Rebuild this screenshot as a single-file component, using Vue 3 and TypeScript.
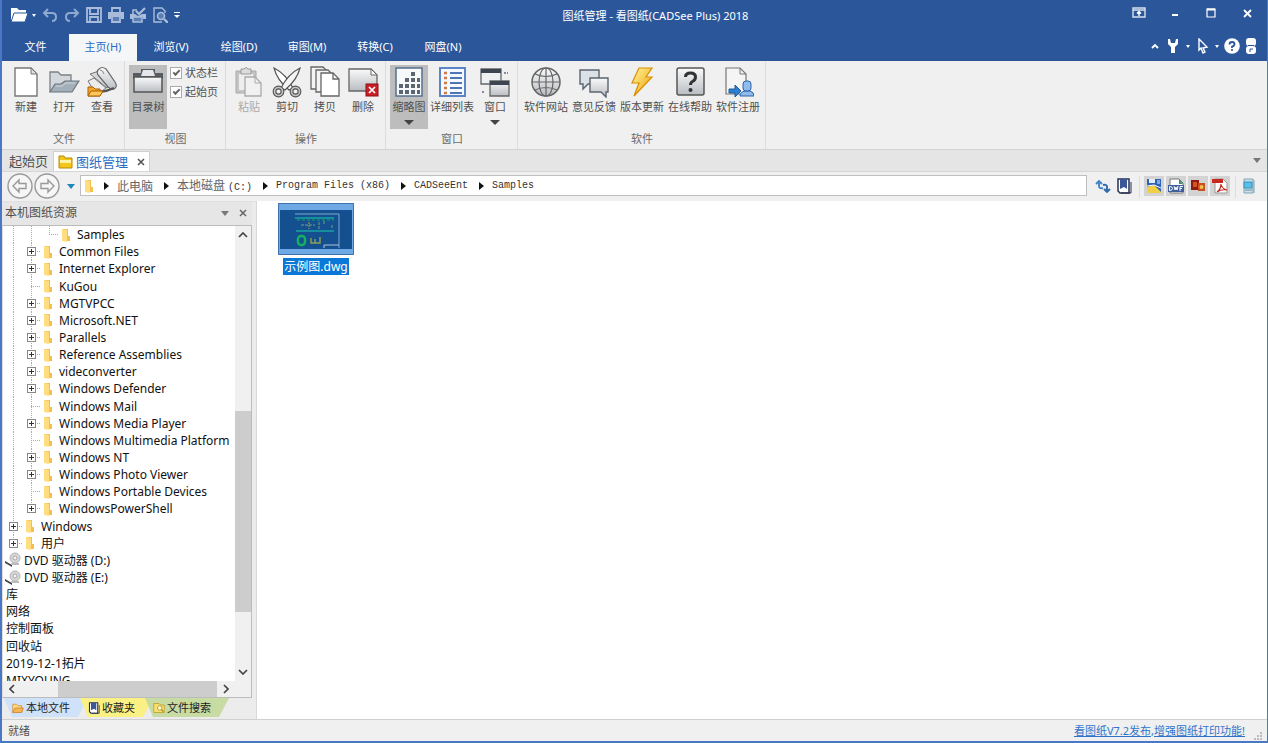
<script setup lang="ts">
import { ref } from 'vue'

type Kind = 'line' | 'plus' | 'tee' | 'elbow' | 'end'
interface TreeRow { label: string; cells: Kind[]; icon?: string }
interface RibbonButton { label: string; icon: string; active?: boolean; disabled?: boolean; menu?: boolean }
interface RibbonGroup { label: string; buttons: RibbonButton[]; checks?: boolean }

const grad =
  '<defs><linearGradient id="gr" x1="0" y1="0" x2="0" y2="1"><stop offset="0" stop-color="#fafafa"/><stop offset="1" stop-color="#b9bdc2"/></linearGradient>' +
  '<linearGradient id="gy" x1="0" y1="0" x2="1" y2="1"><stop offset="0" stop-color="#fff6a0"/><stop offset="1" stop-color="#f0a000"/></linearGradient></defs>'

const big: Record<string, string> = {
  fresh: '<path d="M5 2h16l6 6v22H5z" fill="#fff" stroke="#777" stroke-width="1.4"/><path d="M21 2v6h6z" fill="#ddd" stroke="#777"/>',
  open: '<path d="M2 26V6h8l3 3h10v7" fill="#d3d8dd" stroke="#7b8187" stroke-width="1.3"/><path d="M2 26l5-8h6l4-3h14l-7 11z" fill="#a3afb9" stroke="#6b747c" stroke-width="1.2"/><path d="M8 20h6l4-3h9" fill="none" stroke="#d0d8de"/>',
  view: '<path d="M2 15l6-3 12 10-4 3H8z" fill="#ececec" stroke="#777"/><path d="M9 12L4 8l9-3 14 14-6 3z" fill="#d5d7d9" stroke="#777"/><path d="M13 3q3-3 7 0l9 13q3 5-1 7-3 1-6-2L12 9q-2-4 1-6z" fill="url(#gr)" stroke="#666" stroke-width="1.2"/><path d="M14 4q3 0 4 4" fill="none" stroke="#888"/><path d="M14 26q8-1 14-4" fill="none" stroke="#555" stroke-width="2"/><path d="M2 30V21h5l2 2h5v7z" fill="#f5a623" stroke="#a85f08"/><path d="M2 30l3-5h12l-3 5z" fill="#ffc75a" stroke="#a85f08"/>',
  dirs: '<path d="M1 7h8V3h14v4h8v6H1z" fill="#555d63"/><path d="M11 4h10l2 6H9z" fill="#e5e7e8"/><path d="M2 11h28v15H2z" fill="url(#gr)" stroke="#555" stroke-width="1.5"/>',
  paste: '<path d="M3 5h20v22H3z" fill="#c4c4c4" stroke="#aaa"/><path d="M6 8h14v16H6z" fill="#eee"/><path d="M8 3h3q2-3 4 0h3v5H8z" fill="#ddd" stroke="#999"/><path d="M12 11h10l6 6v13H12z" fill="#f1f1f1" stroke="#aaa" stroke-width="1.3"/><path d="M22 11v6h6" fill="none" stroke="#aaa"/>',
  cut: '<path d="M3 2q12 6 19 20l-4 2Q6 14 3 2z" fill="#fff" stroke="#555" stroke-width="1.2"/><path d="M29 2q-12 6-19 20l4 2Q26 14 29 2z" fill="#f4f4f4" stroke="#555" stroke-width="1.2"/><circle cx="7.5" cy="25.500" r="4" fill="none" stroke="#555" stroke-width="3.800"/><circle cx="24.500" cy="25.500" r="4" fill="none" stroke="#555" stroke-width="3.800"/><circle cx="7.5" cy="25.500" r="4" fill="none" stroke="#c5c5c5" stroke-width="1.600"/><circle cx="24.500" cy="25.500" r="4" fill="none" stroke="#c5c5c5" stroke-width="1.600"/>',
  copy: '<g fill="#f4f4f4" stroke="#666" stroke-width="1.3"><path d="M2 1h12l4 4v18H2z"/><path d="M7 4h12l4 4v18H7z"/><path d="M12 7h12l6 6v17H12z" fill="#fff"/><path d="M24 7v6h6" fill="none"/></g>',
  del: '<path d="M2 3h22l6 6v16H2z" fill="url(#gr)" stroke="#666" stroke-width="1.3"/><path d="M24 3v6h6z" fill="#fff" stroke="#666"/><rect x="19" y="18" width="12" height="12" fill="#c92027" stroke="#8f0f14"/><path d="M22 21l6 6m0-6l-6 6" stroke="#fff" stroke-width="1.7"/>',
  thumbs: '<rect x="3" y="2" width="26" height="28" fill="#f6f8fa" stroke="#56708f" stroke-width="1.5"/><g fill="#5c6670"><path d="M18 6h4v4h-4zM12 12h4v4h-4zM18 12h4v4h-4zM24 12h3v4h-3zM6 18h4v4H6zM12 18h4v4h-4zM18 18h4v4h-4zM24 18h3v4h-3zM6 24h4v4H6zM12 24h4v4h-4zM18 24h4v4h-4zM24 24h3v4h-3z"/></g>',
  details: '<rect x="4" y="2" width="25" height="28" fill="#f5f9ff" stroke="#5b85c6" stroke-width="2"/><path d="M8 7h3M8 12h3M8 17h3M8 22h3M8 27h3" stroke="#d07a48" stroke-width="2.5"/><path d="M14 7h12M14 12h12M14 17h12M14 22h12M14 27h12" stroke="#4f76b2" stroke-width="2"/>',
  windows: '<path d="M2 3h20v15H2z" fill="#eef0f2" stroke="#666" stroke-width="1.3"/><path d="M2 3h20v4H2z" fill="#3d4650"/><path d="M11 15h19v15H11z" fill="url(#gr)" stroke="#666" stroke-width="1.3"/><path d="M11 15h19v4H11z" fill="#3d4650"/><path d="M25 7h4M5 26H2" fill="none" stroke="#668" stroke-width="1.500" stroke-dasharray="2 1"/>',
  globe: '<circle cx="16" cy="16" r="14" fill="url(#gr)" stroke="#666" stroke-width="1.5"/><g fill="none" stroke="#666" stroke-width="1.2"><ellipse cx="16" cy="16" rx="7" ry="14"/><path d="M16 2v28M2 16h28M5 8q11 5 22 0M5 24q11-5 22 0"/></g>',
  chat: '<path d="M2 4h19v14H10l-5 5v-5H2z" fill="#dce1e7" stroke="#5a6470" stroke-width="1.4"/><path d="M12 12h18v14h-2v5l-5-5H12z" fill="url(#gr)" stroke="#5a6470" stroke-width="1.4"/>',
  bolt: '<path d="M13 2h13l-6 9h6L8 30l5-13H6z" fill="url(#gy)" stroke="#d98f00" stroke-width="1.2"/>',
  help: '<rect x="3" y="2" width="27" height="27" rx="2" fill="url(#gr)" stroke="#555" stroke-width="1.5"/><path d="M11.500 11q0-4 5-4t5 4q0 3-3 4.500-2 1-2 3.500" fill="none" stroke="#333" stroke-width="3"/><circle cx="16.500" cy="24" r="2" fill="#333"/>',
  register: '<path d="M4 2h14l6 6v20H4z" fill="#f5f5f5" stroke="#777" stroke-width="1.2"/><path d="M18 2v6h6" fill="none" stroke="#777"/><path d="M7 23h6v-4l6 6-6 6v-4H7z" fill="#2f7fd0" stroke="#1d5a9e"/><path d="M18 30q0-4 5-5h5q4 1 4 5z" fill="#8fbcec" stroke="#2a63a8"/><rect x="21" y="15" width="8" height="10" rx="3" fill="#8fbcec" stroke="#2a63a8"/>'
}

const small: Record<string, string> = {
  undo: '<path d="M3 6h7q4 0 4 4t-4 4" fill="none" stroke="#8fa9d0" stroke-width="2"/><path d="M6 2L2 6l4 4" fill="none" stroke="#8fa9d0" stroke-width="2"/>',
  redo: '<path d="M13 6H6q-4 0-4 4t4 4" fill="none" stroke="#8fa9d0" stroke-width="2"/><path d="M10 2l4 4-4 4" fill="none" stroke="#8fa9d0" stroke-width="2"/>',
  save: '<path d="M1 1h14v14H1zM4 1v6h8V1M4 15v-5h8v5" fill="none" stroke="#a9bddb" stroke-width="1.800"/>',
  print: '<path d="M4 5V1h8v4" fill="none" stroke="#a9bddb" stroke-width="1.800"/><path d="M0 5h16v7h-3V9H3v3H0z" fill="#a9bddb"/><path d="M4 9h8v6H4z" fill="#5b7fb5" stroke="#a9bddb" stroke-width="1.800"/>',
  print2: '<path d="M3 7V3h4" fill="none" stroke="#a9bddb" stroke-width="1.500"/><path d="M0 7h5l3 2 4-2h4v5h-3v-2H3v2H0z" fill="#a9bddb"/><path d="M3 10h9v5H3z" fill="#5b7fb5" stroke="#a9bddb" stroke-width="1.500"/><path d="M6 4l3 3 6-6" fill="none" stroke="#a9bddb" stroke-width="2.200"/>',
  preview: '<path d="M13 6V4l-3-3H2v14h8" fill="none" stroke="#a9bddb" stroke-width="1.400"/><circle cx="9" cy="9" r="3.500" fill="#5b7fb5" stroke="#a9bddb" stroke-width="1.600"/><path d="M12 12l4 4" stroke="#a9bddb" stroke-width="2.400"/>',
  toggle: '<path d="M2 3h12v9H2zM2 5h12" fill="none" stroke="#d8e2f0" stroke-width="1.400"/><path d="M8 11V7M6 8.500L8 6.500l2 2" fill="none" stroke="#fff" stroke-width="1.400"/>',
  min: '<path d="M5 10h6" stroke="#fff" stroke-width="2"/>',
  max: '<path d="M4 4h8v8H4z" fill="none" stroke="#fff" stroke-width="1.200"/><path d="M4 4.500h8" stroke="#fff" stroke-width="2"/>',
  close: '<path d="M5 5l7 7m0-7l-7 7" stroke="#fff" stroke-width="1.800"/>',
  up: '<path d="M5 10l3-3 3 3" fill="none" stroke="#fff" stroke-width="1.900"/>',
  wrench: '<path d="M3 1v5l3 3v6h4V9l3-3V1h-2l-1 4H6L5 1z" fill="#fff"/>',
  pointer: '<path d="M5 1l8 8-4 1 2 4-2 1-2-5-2 2z" fill="none" stroke="#fff" stroke-width="1.400"/>',
  info: '<circle cx="8" cy="8" r="7.800" fill="#fff"/><path d="M5.500 6.500Q5.500 4 8 4t2.500 2.300Q10.500 8 8 8.600V10" fill="none" stroke="#2b579a" stroke-width="1.800"/><circle cx="8" cy="12" r="1.100" fill="#2b579a"/>',
  user: '<rect x="3" y="0" width="10" height="8" rx="3" fill="#fff"/><rect x="3" y="8" width="10" height="8" rx="3" fill="#fff"/><path d="M7 14v-3h3M5 7.500h6" fill="none" stroke="#2b579a"/>',
  sync: '<path d="M4 3v5q0 3 4 2M1 6l3-3 3 3" fill="none" stroke="#3f84c8" stroke-width="1.900"/><path d="M12 14V9q0-3-4-2M9 11l3 3 3-3" fill="none" stroke="#2f68ac" stroke-width="1.900"/>',
  book: '<path d="M2 1h11v14H4L2 13z" fill="#fff" stroke="#27304f" stroke-width="1.500"/><path d="M4 1h7v10l-3-2-4 2z" fill="#3c5795"/><path d="M15 4v11H5" fill="none" stroke="#27304f"/>',
  image: '<path d="M1 1h14v14H1z" fill="#2e63b5"/><path d="M3 1h6v4H3z" fill="#e6efff"/><path d="M11 2h3v4h-3z" fill="#7fa8e0"/><path d="M1 15V9l7-2 7 4v4z" fill="#f3cf45"/><path d="M8 7l7 3v4z" fill="#2e63b5"/><path d="M1 8l7-1 7 3" fill="none" stroke="#fff"/>',
  dwf: '<path d="M2 1h9l4 4v10H2z" fill="#fff" stroke="#777"/><path d="M11 1v5h4z" fill="#3e8e6e"/><path d="M0 7h16v7H0z" fill="#3e5f9c"/><path d="M1.500 8.500v4q3 0 3-2t-3-2M6 8l1 4 1-3 1 3 1-4M12 13V8.500h3M12 10.500h2" fill="none" stroke="#fff"/>',
  media: '<path d="M1 2h8v10H1z" fill="#8e1a12"/><path d="M8 5h7v8H8z" fill="#c8501e"/><path d="M3 4h4v5H3z" fill="#d8541e"/><circle cx="11.500" cy="9" r="2" fill="#f2c14c"/>',
  pdf: '<path d="M3 1h8l4 4v10H3z" fill="#fff" stroke="#999"/><path d="M0 1h11v4H0z" fill="#c8281e"/><path d="M5 14q4-3 4-8 1 5 6 6-6-1-10 2" fill="none" stroke="#c8281e" stroke-width="1.200"/>',
  device: '<path d="M3 1h9v14H3z" fill="#c9e0ea" stroke="#7fa3b5"/><path d="M3 4h8v6H3z" fill="#57bfe8" stroke="#3a90bb"/><path d="M13 2v13" stroke="#7fa3b5"/><path d="M4 12h7" stroke="#6b93a5"/>',
  folder: '<path d="M4 2h6v7h2v5H4z" fill="#f3c04d"/><path d="M4 2l5 1v12l-5-1z" fill="#ffdd80"/>',
  disc: '<circle cx="10" cy="6" r="5" fill="#d6d6d6" stroke="#b5b5b5"/><circle cx="10" cy="6" r="2" fill="#f4f4f4" stroke="#aaa"/><path d="M6 11h8v2H7z" fill="#bbb"/><path d="M0 9l7 4v2l-7-4z" fill="#444"/>',
  local: '<path d="M1 14V3h5l2 2h5v3" fill="#ffd98c" stroke="#d28a2e"/><path d="M1 14l3-6h11l-2 6z" fill="#f8b552" stroke="#c97b22"/>',
  search: '<path d="M1 2h7l2 2h5v10H1z" fill="#f8e070" stroke="#b99a24"/><circle cx="9" cy="8" r="3" fill="#fffbd0" stroke="#aa8d20"/><path d="M11 10l3 3" stroke="#aa8d20" stroke-width="1.500"/>'
}

const quick = ['undo', 'redo', 'save', 'print', 'print2', 'preview']
const quickNames = ['撤销', '重做', '保存', '打印', '批量打印', '打印预览']
const windowControls = [['toggle', '功能区显示'], ['min', '最小化'], ['max', '最大化'], ['close', '关闭']]
const menus = ['文件', '主页(H)', '浏览(V)', '绘图(D)', '审图(M)', '转换(C)', '网盘(N)']
const menu = ref(1)

const groups: RibbonGroup[] = [
  { label: '文件', buttons: [{ label: '新建', icon: 'fresh' }, { label: '打开', icon: 'open' }, { label: '查看', icon: 'view' }] },
  { label: '视图', buttons: [{ label: '目录树', icon: 'dirs', active: true }], checks: true },
  { label: '操作', buttons: [{ label: '粘贴', icon: 'paste', disabled: true }, { label: '剪切', icon: 'cut' }, { label: '拷贝', icon: 'copy' }, { label: '删除', icon: 'del' }] },
  { label: '窗口', buttons: [{ label: '缩略图', icon: 'thumbs', active: true, menu: true }, { label: '详细列表', icon: 'details' }, { label: '窗口', icon: 'windows', menu: true }] },
  { label: '软件', buttons: [{ label: '软件网站', icon: 'globe' }, { label: '意见反馈', icon: 'chat' }, { label: '版本更新', icon: 'bolt' }, { label: '在线帮助', icon: 'help' }, { label: '软件注册', icon: 'register' }] }
]
const showStatus = ref(true)
const showStart = ref(true)

const crumbs = [
  { han: '此电脑', latin: '' },
  { han: '本地磁盘', latin: '(C:)' },
  { han: '', latin: 'Program Files (x86)' },
  { han: '', latin: 'CADSeeEnt' },
  { han: '', latin: 'Samples' }
]
const filters = [['image', '图片'], ['dwf', 'DWF'], ['media', '媒体'], ['pdf', 'PDF']]

const sub = (label: string, kind: Kind = 'plus'): TreeRow => ({ label, cells: ['line', kind], icon: 'folder' })
const tree: TreeRow[] = [
  { label: 'Samples', cells: ['line', 'line', 'elbow'], icon: 'folder' },
  sub('Common Files'), sub('Internet Explorer'), sub('KuGou', 'tee'), sub('MGTVPCC'), sub('Microsoft.NET'),
  sub('Parallels'), sub('Reference Assemblies'), sub('videconverter'), sub('Windows Defender'), sub('Windows Mail', 'tee'),
  sub('Windows Media Player'), sub('Windows Multimedia Platform', 'tee'), sub('Windows NT'), sub('Windows Photo Viewer'),
  sub('Windows Portable Devices', 'tee'), sub('WindowsPowerShell', 'end'),
  { label: 'Windows', cells: ['plus'], icon: 'folder' },
  { label: '用户', cells: ['end'], icon: 'folder' },
  { label: 'DVD 驱动器 (D:)', cells: [], icon: 'disc' },
  { label: 'DVD 驱动器 (E:)', cells: [], icon: 'disc' },
  { label: '库', cells: [] }, { label: '网络', cells: [] }, { label: '控制面板', cells: [] },
  { label: '回收站', cells: [] }, { label: '2019-12-1拓片', cells: [] }, { label: 'MIXYOUNG', cells: [] }
]
const sideTabs = [
  { label: '本地文件', icon: 'local', tone: 'blue' },
  { label: '收藏夹', icon: 'book', tone: 'yellow' },
  { label: '文件搜索', icon: 'search', tone: 'green' }
]
</script>

<template>
  <div class="app">
    <svg class="defs" aria-hidden="true" v-html="grad"></svg>
    <header class="top">
      <div class="titlebar">
        <div class="quick">
          <button class="qbtn opener" aria-label="打开">
            <svg width="18" height="16" viewBox="0 0 18 16"><path d="M1 15V1h6l2 2h7v3" fill="#fff" /><path d="M1 15l3-9h14l-3 9z" fill="#fff" stroke="#2b579a" /></svg>
            <i class="caret"></i>
          </button>
          <button v-for="(q, i) in quick" :key="q" class="qbtn" :aria-label="quickNames[i]">
            <svg width="16" height="16" viewBox="0 0 16 16" v-html="small[q]"></svg>
          </button>
          <button class="qbtn more" aria-label="自定义"><i class="bar"></i><i class="caret"></i></button>
        </div>
        <h1>图纸管理 - 看图纸(CADSee Plus) 2018</h1>
        <div class="controls">
          <button v-for="c in windowControls" :key="c[0]" :aria-label="c[1]">
            <svg width="16" height="16" viewBox="0 0 16 16" v-html="small[c[0]]"></svg>
          </button>
        </div>
      </div>
      <div class="menubar">
        <nav class="menus">
          <button v-for="(m, i) in menus" :key="m" :class="{ on: i === menu }" @click="menu = i">{{ m }}</button>
        </nav>
        <div class="tools">
          <button aria-label="折叠"><svg width="16" height="16" viewBox="0 0 16 16" v-html="small.up"></svg></button>
          <button class="split" aria-label="工具"><svg width="14" height="16" viewBox="1 0 14 16" v-html="small.wrench"></svg><i class="caret"></i></button>
          <button class="split" aria-label="指针"><svg width="14" height="16" viewBox="1 0 14 16" v-html="small.pointer"></svg><i class="caret"></i></button>
          <button aria-label="帮助"><svg width="16" height="16" viewBox="0 0 16 16" v-html="small.info"></svg></button>
          <button aria-label="用户"><svg width="16" height="16" viewBox="0 0 16 16" v-html="small.user"></svg></button>
        </div>
      </div>
    </header>

    <section class="ribbon">
      <div v-for="g in groups" :key="g.label" class="group">
        <div class="items">
          <button v-for="b in g.buttons" :key="b.label" class="tool" :class="{ active: b.active, wide: b.label.length > 3 }" :disabled="b.disabled">
            <svg width="32" height="32" viewBox="0 0 32 32" v-html="big[b.icon]"></svg>
            <span>{{ b.label }}</span>
            <i v-if="b.menu" class="down"></i>
          </button>
          <div v-if="g.checks" class="checks">
            <label><input v-model="showStatus" type="checkbox" />状态栏</label>
            <label><input v-model="showStart" type="checkbox" />起始页</label>
          </div>
        </div>
        <div class="caption">{{ g.label }}</div>
      </div>
    </section>

    <div class="doctabs">
      <button class="doc">起始页</button>
      <div class="doc current">
        <svg width="15" height="14" viewBox="0 0 15 14"><path d="M1 13V1h5l1 2h7v10z" fill="#f5c518" stroke="#b58a00" /><path d="M2 5h11v3H2z" fill="#fff3a8" /></svg>
        <button class="name">图纸管理</button>
        <button class="x" aria-label="关闭标签"><svg width="8" height="8" viewBox="0 0 8 8"><path d="M1 1l6 6m0-6L1 7" stroke="#555" stroke-width="1.6" /></svg></button>
      </div>
      <button class="list" aria-label="标签列表"><i class="down grey"></i></button>
    </div>

    <div class="address">
      <button class="nav" aria-label="后退"><svg width="26" height="26" viewBox="0 0 26 26"><circle cx="13" cy="13" r="12" fill="#f6f6f6" stroke="#999" stroke-width="1.4" /><path d="M6 13l6-6v3.500h7v5h-7V19z" fill="none" stroke="#999" stroke-width="1.4" /></svg></button>
      <button class="nav" aria-label="前进"><svg width="26" height="26" viewBox="0 0 26 26"><circle cx="13" cy="13" r="12" fill="#f6f6f6" stroke="#999" stroke-width="1.4" /><path d="M20 13l-6-6v3.500H7v5h7V19z" fill="none" stroke="#999" stroke-width="1.4" /></svg></button>
      <button class="hist" aria-label="历史"><i class="down blue"></i></button>
      <nav class="path">
        <svg width="16" height="16" viewBox="0 0 16 16" v-html="small.folder"></svg>
        <template v-for="(c, i) in crumbs" :key="i">
          <i class="right"></i>
          <button class="crumb"><span v-if="c.han" class="han">{{ c.han }}</span><span v-if="c.latin">{{ c.latin }}</span></button>
        </template>
      </nav>
      <div class="actions">
        <button aria-label="刷新"><svg width="16" height="16" viewBox="0 0 16 16" v-html="small.sync"></svg></button>
        <button aria-label="收藏"><svg width="16" height="16" viewBox="0 0 16 16" v-html="small.book"></svg></button>
      </div>
      <div class="actions filters">
        <button v-for="f in filters" :key="f[0]" class="pressed" :aria-label="f[1]"><svg width="16" height="16" viewBox="0 0 16 16" v-html="small[f[0]]"></svg></button>
      </div>
      <div class="actions last">
        <button aria-label="设备"><svg width="16" height="16" viewBox="0 0 16 16" v-html="small.device"></svg></button>
      </div>
    </div>

    <main class="body">
      <aside class="side">
        <div class="head">
          <span>本机图纸资源</span>
          <button aria-label="选项"><i class="down grey"></i></button>
          <button aria-label="关闭面板"><svg width="8" height="8" viewBox="0 0 8 8"><path d="M1 1l6 6m0-6L1 7" stroke="#666" stroke-width="1.5" /></svg></button>
        </div>
        <div class="frame">
          <div class="view">
            <ul class="tree">
              <li v-for="r in tree" :key="r.label">
                <span v-for="(k, i) in r.cells" :key="i" class="cell" :class="k"><i v-if="k === 'plus' || k === 'end'" class="box"></i></span>
                <svg v-if="r.icon" :class="r.icon" width="16" height="16" viewBox="0 0 16 16" v-html="small[r.icon]"></svg>
                <span class="label">{{ r.label }}</span>
              </li>
            </ul>
          </div>
          <div class="vbar">
            <svg width="10" height="6" viewBox="0 0 10 6"><path d="M1 5l4-4 4 4" fill="none" stroke="#444" stroke-width="1.7" /></svg>
            <div class="track"><div class="thumb"></div></div>
            <svg width="10" height="6" viewBox="0 0 10 6"><path d="M1 1l4 4 4-4" fill="none" stroke="#444" stroke-width="1.7" /></svg>
          </div>
          <div class="hbar">
            <svg width="6" height="10" viewBox="0 0 6 10"><path d="M5 1L1 5l4 4" fill="none" stroke="#444" stroke-width="1.7" /></svg>
            <div class="track"><div class="thumb"></div></div>
            <svg width="6" height="10" viewBox="0 0 6 10"><path d="M1 1l4 4-4 4" fill="none" stroke="#444" stroke-width="1.7" /></svg>
          </div>
        </div>
        <div class="sidetabs">
          <button v-for="t in sideTabs" :key="t.label" :class="t.tone">
            <svg width="12" height="12" viewBox="0 0 16 16" v-html="small[t.icon]"></svg>{{ t.label }}
          </button>
        </div>
      </aside>
      <section class="files">
        <button class="file">
          <svg width="76" height="52" viewBox="0 0 76 52">
            <path d="M0 0h76v52H0z" fill="#6ea9e6" /><path d="M.5.5h75v51H.5z" fill="none" stroke="#3f72ad" /><path d="M2 7h72v39H2z" fill="#14508f" />
            <path d="M17 11h44v34" fill="none" stroke="#7ba9c9" /><path d="M17 15h39M18 28h38" stroke="#16a4a4" stroke-width="1.5" />
            <path d="M19 17h37" stroke="#12a060" stroke-dasharray="3 2" /><path d="M23 22h14M41 19v7M46 18v4M54 22v4" stroke="#6aa080" stroke-dasharray="3 1" /><path d="M31 19v7" stroke="#b8a040" stroke-dasharray="2 1" />
            <rect x="20" y="33" width="7" height="9" rx="3" fill="none" stroke="#12b060" stroke-width="2.5" /><path d="M33 35v5h4v-4m0 4h5v-6" fill="none" stroke="#8fa050" stroke-width="1.4" /><path d="M46 45v-3h15" fill="none" stroke="#b0c4d8" />
          </svg>
          <span>示例图.dwg</span>
        </button>
      </section>
    </main>

    <footer class="status">
      <span>就绪</span>
      <a href="#">看图纸V7.2发布,增强图纸打印功能!</a>
      <svg width="10" height="10" viewBox="0 0 10 10"><path d="M7 1h2v2H7zM4 4h2v2H4zM7 4h2v2H7zM1 7h2v2H1zM4 7h2v2H4zM7 7h2v2H7z" fill="#bbb" /></svg>
    </footer>
  </div>
</template>

<style>
html, body { margin: 0; overflow: hidden; }
</style>

<style scoped>
.app { box-sizing: border-box; display: flex; flex-direction: column; height: 100vh; border: 1px solid #4a78c4; border-width: 0 1px 2px 2px; background: #f0f0f0; color: #505050; font: 11px/16px "Noto Sans", "Noto Sans CJK SC", sans-serif; }
.defs { position: absolute; width: 0; height: 0; }
button { margin: 0; padding: 0; border: 0; background: none; color: inherit; font: inherit; }
svg { display: block; flex: none; }
i { display: block; flex: none; }
.top { background: #2b579a; color: #fff; flex: none; }
.titlebar { display: flex; height: 34px; }
.quick { display: flex; align-items: center; padding: 0 0 4px 8px; gap: 6px; }
.qbtn { display: flex; align-items: center; gap: 4px; }
.more { flex-direction: column; gap: 2px; }
.caret { border: 2px solid transparent; border-top: 3px solid #fff; border-bottom: 0; }
.more .caret { border-width: 3px 3px 0; }
.bar { width: 6px; height: 1px; background: #fff; }
h1 { flex: 1; margin: 0; font: inherit; line-height: 32px; text-align: center; }
.controls { display: flex; align-items: center; gap: 20px; padding: 0 12px 8px 0; }
.menubar { display: flex; justify-content: space-between; height: 27px; }
.menus { display: flex; }
.menus button { width: 68px; line-height: 26px; padding-bottom: 1px; }
.menus button:first-child { width: 67px; }
.menus .on { background: #f5f6f7; color: #2b6cc4; }
.tools { display: flex; align-items: center; gap: 3px; padding: 0 8px 3px 0; }
.split { display: flex; align-items: center; gap: 6px; margin-right: 2px; }

.ribbon { display: flex; flex: none; height: 88px; padding-left: 1px; border-bottom: 1px solid #d2d2d2; }
.group { display: flex; flex-direction: column; padding: 4px 3px 0 4px; border-right: 1px solid #dcdcdc; }
.items { display: flex; flex: 1; }
.tool { box-sizing: border-box; display: flex; flex-direction: column; align-items: center; width: 38px; height: 64px; padding-top: 1px; white-space: nowrap; }
.tool span { margin-top: 1px; }
.tool .down { margin-top: 5px; }
.wide { width: 48px; }
.active { background: #bdbdbd; }
.tool:disabled { color: #aaa; }
.caption { text-align: center; color: #6a6a6a; line-height: 16px; padding-bottom: 2px; }
.checks { display: flex; flex-direction: column; width: 52px; margin-left: 3px; gap: 3px; }
.checks label { display: flex; align-items: center; gap: 3px; height: 16px; white-space: nowrap; }
.checks input { appearance: none; flex: none; box-sizing: border-box; width: 12px; height: 12px; margin: 0; border: 1px solid #aaa; background: #fff; display: grid; place-items: center; }
.checks input:checked::before { content: ""; width: 5px; height: 2px; border: solid #666; border-width: 0 0 2px 2px; transform: rotate(-45deg); margin-bottom: 2px; }
.down { border: 5px solid transparent; border-top-color: #444; border-bottom: 0; }
.down.grey { border-width: 5px 4px 0; border-top-color: #777; }
.down.blue { border-width: 5px 4px 0; border-top-color: #1d86ba; }

.doctabs { display: flex; align-items: stretch; flex: none; height: 21px; border-bottom: 1px solid #d6d6d6; background: #e5e5e5; font-size: 13px; line-height: 20px; }
.doc { padding: 0 5px 0 7px; }
.current { display: flex; align-items: center; gap: 3px; padding: 0 4px; margin-top: 1px; border: 1px solid #cfcfcf; border-bottom: 0; background: #fff; }
.name { color: #2b6cc4; line-height: 18px; }
.x { margin-left: 6px; }
.list { margin-left: auto; padding-right: 6px; }

.address { display: flex; align-items: center; flex: none; height: 29px; padding: 0 10px 0 5px; }
.nav { margin-right: 1px; padding-bottom: 2px; }
.hist { padding: 0 5px 0 6px; }
.path { display: flex; flex: 1; align-items: center; height: 19px; border: 1px solid #bfbfbf; background: #fff; margin-bottom: 2px; }
.path .right { margin-left: 11px; border: 4px solid transparent; border-left: 5px solid #111; border-right: 0; }
.path svg + .right { margin-left: 7px; }
.crumb { display: flex; align-items: baseline; gap: 3px; margin-left: 8px; font: 10px/19px "Liberation Mono", "Noto Sans CJK SC", monospace; color: #333; white-space: pre; }
.han { font-size: 12px; font-family: "Noto Sans CJK SC", sans-serif; color: #666; }
.actions { display: flex; gap: 5px; padding: 0 6px 2px 8px; }
.filters { gap: 2px; padding: 0 5px 2px 4px; border-left: 1px solid #ddd; border-right: 1px solid #ddd; }
.actions:not(.filters):not(.last) { padding-right: 7px; }
.last { padding: 0 0 2px 5px; }
.pressed { padding: 2px; background: #d3d3d3; }

.body { display: flex; flex: 1; min-height: 0; }
.side { display: flex; flex-direction: column; width: 250px; padding-right: 4px; background: #ececec; border-top: 1px solid #e0e0e0; }
.head { display: flex; align-items: center; height: 22px; padding: 0 5px 1px 3px; gap: 10px; background: #e6e6e6; font-size: 12px; }
.head span { flex: 1; }
.frame { flex: 1; min-height: 0; display: grid; grid-template: minmax(0, 1fr) 16px / minmax(0, 1fr) 16px; border: 1px solid #bcbcbc; border-left-color: #ddd; background: #f0f0f0; }
.view { min-height: 0; overflow: hidden; background: #fff; }
.tree { display: grid; grid-auto-rows: minmax(0, 1fr); height: calc(100% + 8px); margin: 0; padding: 0 0 0 1px; list-style: none; font: 12px/17px "Noto Sans", "Noto Sans CJK SC", sans-serif; color: #111; }
.tree li { display: flex; align-items: center; white-space: nowrap; }
.label { padding-left: 1px; }
.label:first-child { padding-left: 2px; }
.cell { --v: repeating-linear-gradient(#aaa 0 1px, transparent 1px 2px); --h: repeating-linear-gradient(90deg, #aaa 0 1px, transparent 1px 2px); display: flex; align-items: center; justify-content: center; align-self: stretch; width: 18px; }
.line { background: var(--v) 9px 0 / 1px 100% no-repeat; }
.plus, .tee { background: var(--v) 9px 0 / 1px 100% no-repeat, var(--h) 9px 50% / 9px 1px no-repeat; }
.elbow, .end { background: var(--v) 9px 0 / 1px 50% no-repeat, var(--h) 9px 50% / 9px 1px no-repeat; }
.box { width: 7px; height: 7px; border: 1px solid #888; background: linear-gradient(#333, #333) 50% 50% / 5px 1px no-repeat, linear-gradient(#333, #333) 50% 50% / 1px 5px no-repeat, #fff; }
.folder { margin-right: 2px; }
.disc { margin: 0 2px 0 1px; }
.vbar, .hbar { display: flex; align-items: center; gap: 6px; background: #f0f0f0; }
.vbar { flex-direction: column; padding: 6px 0; }
.hbar { padding: 0 6px; }
.track { display: flex; flex: 1; align-self: stretch; }
.thumb { background: #cdcdcd; }
.vbar .track { flex-direction: column; }
.vbar .thumb { height: 48%; margin-top: 167px; }
.hbar .track { justify-content: flex-end; }
.hbar .thumb { width: 81%; }
.sidetabs { display: flex; height: 21px; padding-left: 2px; }
.sidetabs button { display: flex; align-items: center; gap: 2px; height: 19px; margin-right: -8px; padding: 0 18px 0 8px; clip-path: polygon(0 0, 100% 0, calc(100% - 10px) 100%, 8px 100%); color: #222; white-space: nowrap; }
.sidetabs .blue { background: #cfe2fa; }
.sidetabs .yellow { background: #fbf083; }
.sidetabs .green { background: #c8dba2; }
.files { flex: 1; padding: 2px 21px; border-left: 1px solid #d8d8d8; background: #fff; }
.file { display: flex; flex-direction: column; align-items: center; gap: 3px; width: 76px; }
.file span { padding: 0 1px; background: #0a78d6; color: #fff; font: 12px/17px "Noto Sans", "Noto Sans CJK SC", sans-serif; }
.status { display: flex; align-items: center; flex: none; height: 21px; padding: 0 4px 0 6px; border-top: 1px solid #d0d0d0; }
.status a { margin-left: auto; margin-right: 8px; color: #2f74cc; }
.status svg { align-self: flex-end; }
</style>
